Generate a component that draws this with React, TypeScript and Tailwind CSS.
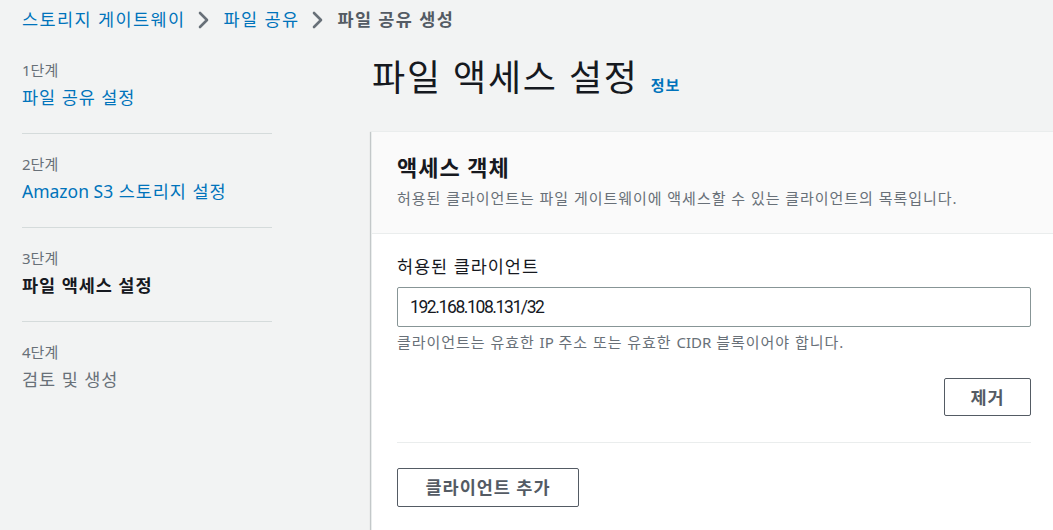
const font = { fontFamily: '"Noto Sans", "Noto Sans CJK KR", sans-serif' }

function Chevron() {
  return (
    <svg width="14" height="18" viewBox="0 0 14 18" className="shrink-0">
      <polyline points="3,2 10,9 3,16" fill="none" stroke="#687078" strokeWidth="2.6" strokeLinecap="round" strokeLinejoin="round" />
    </svg>
  )
}

const steps = [
  { n: '1단계', title: <>파일 공유 설정</>, state: 'link' },
  { n: '2단계', title: <><span className="tracking-normal">Amazon S3</span> 스토리지 설정</>, state: 'link' },
  { n: '3단계', title: <>파일 액세스 설정</>, state: 'active' },
  { n: '4단계', title: <>검토 및 생성</>, state: 'disabled' },
]

export default function App() {
  return (
    <div className="h-[530px] w-[1053px] overflow-hidden bg-[#f2f3f3] tracking-[0.06em] text-[#16191f]" style={font}>
      <nav className="flex h-[39px] items-center gap-[12px] pl-[22px] text-[17.5px] tracking-[0.08em]">
        <a className="text-[#0073bb]">스토리지 게이트웨이</a>
        <Chevron />
        <a className="text-[#0073bb]">파일 공유</a>
        <Chevron />
        <span className="font-bold text-[#545b64]">파일 공유 생성</span>
      </nav>

      <div className="flex">
        <aside className="w-[371px] shrink-0 pl-[22px]">
          <ul className="w-[250px]">
            {steps.map((s, i) => (
              <li
                key={s.n}
                className={`${i === 0 ? 'pt-[21px]' : 'pt-[20px]'} pb-[24px] ${i < steps.length - 1 ? 'border-b border-[#d5dbdb]' : ''}`}
              >
                <div className="text-[15px] leading-[20px] tracking-normal text-[#687078]">{s.n}</div>
                <div
                  className={`mt-[5px] text-[17.5px] leading-[24px] ${
                    s.state === 'link' ? 'text-[#0073bb]' : s.state === 'active' ? 'font-bold text-[#16191f]' : 'text-[#687078]'
                  }`}
                >
                  {s.title}
                </div>
              </li>
            ))}
          </ul>
        </aside>

        <main className="min-w-0 flex-1">
          <div className="mt-[17px] mb-[31px] flex items-baseline gap-[12px] pl-[1px]">
            <h1 className="text-[36px] leading-[44px] font-normal tracking-[0.05em] text-[#16191f]">파일 액세스 설정</h1>
            <a className="text-[15px] font-bold text-[#0073bb]">정보</a>
          </div>

          <section className="w-[686px] shrink-0 border border-[#eaeded] bg-white shadow-[0_1px_1px_0_rgba(0,28,36,0.3),1px_1px_1px_0_rgba(0,28,36,0.15),-1px_1px_1px_0_rgba(0,28,36,0.15)]">
            <header className="border-b border-[#eaeded] bg-[#fafafa] px-[25px] pt-[21px] pb-[24px]">
              <h2 className="text-[22px] leading-[28px] font-bold text-[#16191f]">액세스 객체</h2>
              <p className="mt-[6px] text-[15px] leading-[22px] text-[#687078]">
                허용된 클라이언트는 파일 게이트웨이에 액세스할 수 있는 클라이언트의 목록입니다.
              </p>
            </header>

            <div className="px-[25px] pt-[20px] pb-[30px]">
              <label className="block text-[17.5px] leading-[24px] text-[#16191f]">허용된 클라이언트</label>
              <div className="mt-[9px] flex h-[40px] items-center rounded-[2px] border border-[#879596] bg-white px-[12px] font-['Roboto',sans-serif] text-[17.5px] tracking-[-1.4px] text-[#16191f]">
                192.168.108.131/32
              </div>
              <p className="mt-[5px] text-[15px] leading-[20px] text-[#687078]">
                클라이언트는 유효한 <span className="tracking-normal">IP</span> 주소 또는 유효한{' '}
                <span className="tracking-normal">CIDR</span> 블록이어야 합니다.
              </p>
              <div className="mt-[26px] flex justify-end">
                <button className="h-[38px] w-[87px] rounded-[2px] border border-[#545b64] bg-white text-[17.5px] font-bold text-[#545b64]">
                  제거
                </button>
              </div>
              <div className="mt-[26px] border-t border-[#eaeded]" />
              <button className="mt-[25px] h-[39px] w-[182px] rounded-[2px] border border-[#545b64] bg-white text-[17.5px] font-bold text-[#545b64]">
                클라이언트 추가
              </button>
            </div>
          </section>
        </main>
      </div>
    </div>
  )
}
